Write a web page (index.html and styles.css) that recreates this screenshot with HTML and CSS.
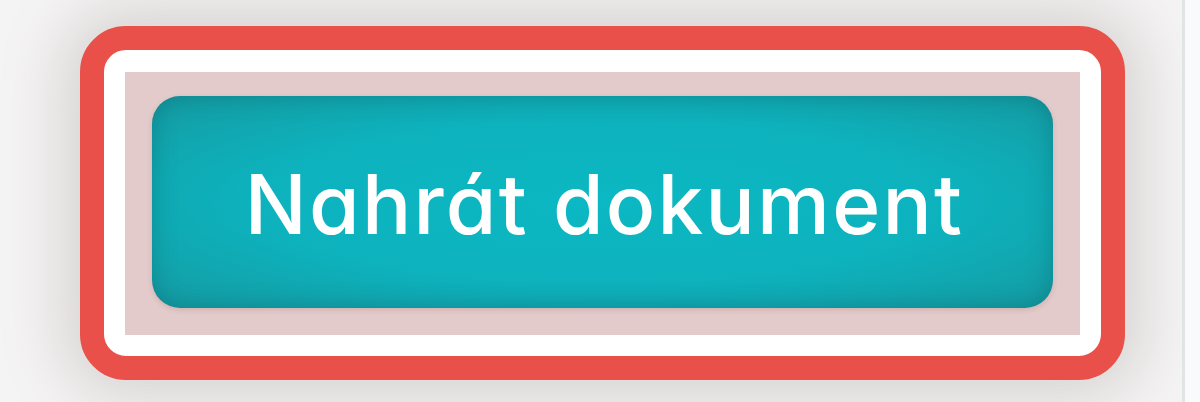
FILE: index.html
```html
<!DOCTYPE html>
<html lang="cs">
<head>
<meta charset="utf-8">
<title>Nahrát dokument</title>
<link rel="stylesheet" href="styles.css">
</head>
<body>
<div class="stage">
  <main class="main">
    <div class="focus-ring">
      <div class="ring-gap">
        <div class="well">
          <button class="btn" type="button">Nahrát dokument</button>
        </div>
      </div>
    </div>
  </main>
  <div class="divider"></div>
  <aside class="side"></aside>
</div>
</body>
</html>
```
FILE: styles.css
```css
html, body {
  margin: 0;
  padding: 0;
}
body {
  width: 1200px;
  height: 402px;
  overflow: hidden;
  background: #f6f5f5;
  font-family: Inter, "Noto Sans", "Liberation Sans", sans-serif;
}
.stage {
  display: flex;
  height: 402px;
}
.main {
  width: 1182px;
  flex: none;
  padding: 26px 0 0 80px;
  box-sizing: border-box;
  background: #f5f4f4;
}
.divider {
  width: 3px;
  flex: none;
  background: #dfe4e7;
}
.side {
  flex: 1;
  background: #f8fafb;
}
.focus-ring {
  display: inline-block;
  border: 24px solid #e9504a;
  border-radius: 46px;
  background: #ffffff;
  box-shadow: 0 0 60px 20px rgba(120, 100, 100, 0.22);
}
.ring-gap {
  padding: 22px 21px 21px 21px;
}
.well {
  background: #e3cbcb;
  padding: 24px 27px 27px 27px;
}
.btn {
  display: flex;
  align-items: center;
  justify-content: center;
  width: 901px;
  height: 212px;
  border: 0;
  border-radius: 28px;
  background: radial-gradient(ellipse at center, #0bb8c3 0%, #0db2bd 55%, #159ba2 100%);
  box-shadow: inset 0 0 24px rgba(0, 70, 80, 0.3), 0 2px 5px rgba(120, 60, 60, 0.18);
  color: #ffffff;
  font-family: Inter, "Noto Sans", "Liberation Sans", sans-serif;
  font-feature-settings: "cv11" 1;
  font-weight: 500;
  font-size: 82px;
  letter-spacing: 2.2px;
  padding: 4px 0 0 4px;
}
```
